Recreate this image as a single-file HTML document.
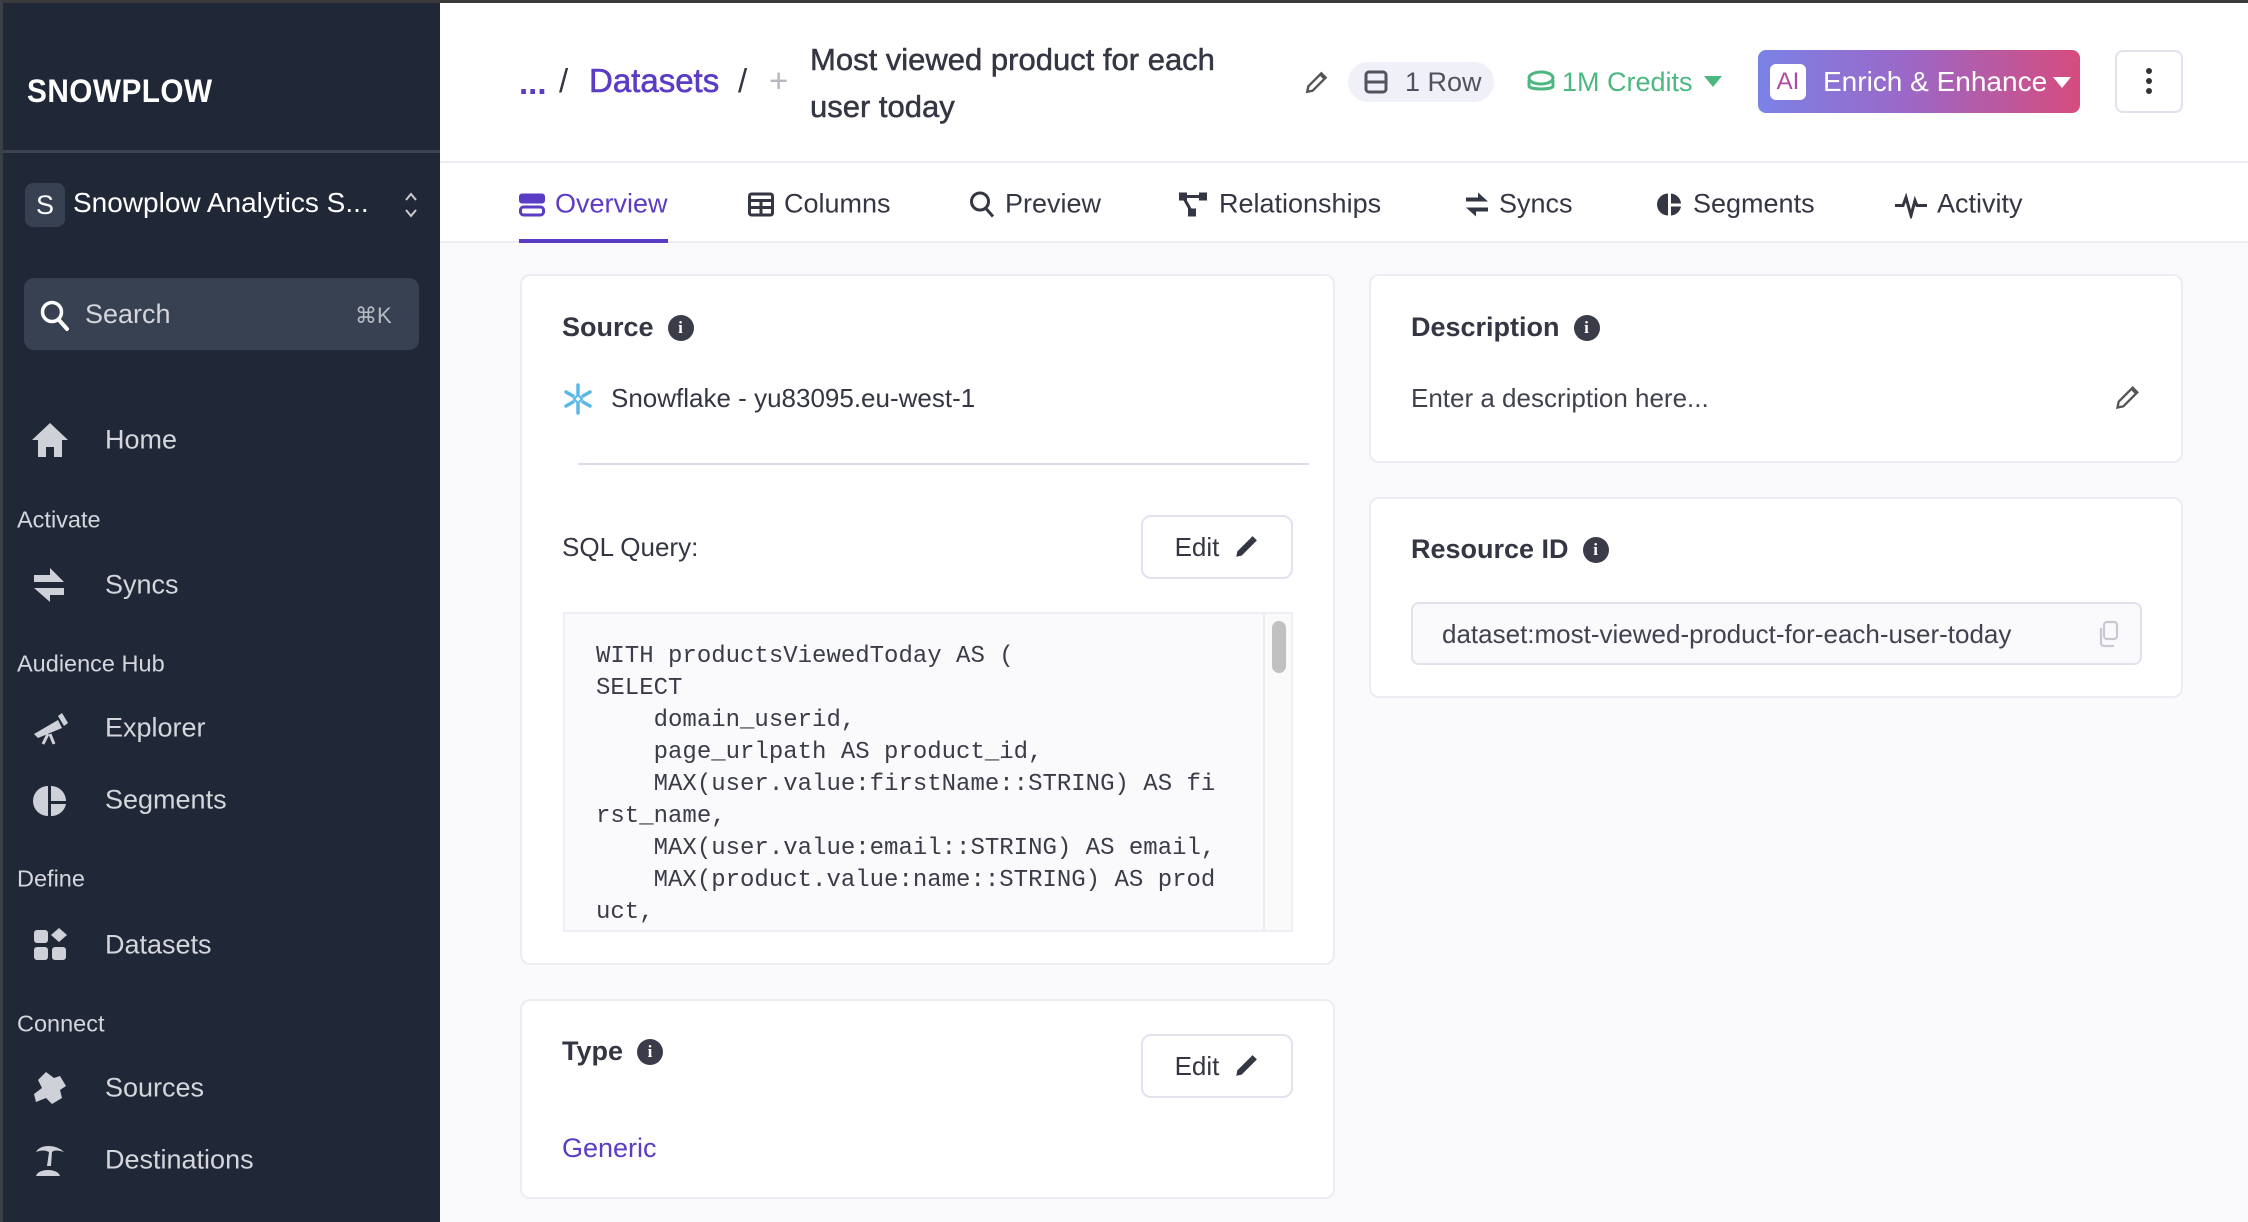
<!DOCTYPE html>
<html><head><meta charset="utf-8"><style>
*{box-sizing:border-box;margin:0;padding:0}
body{width:2248px;height:1222px;overflow:hidden;background:#fafafc;font-family:"Liberation Sans",sans-serif;color:#343643;position:relative}
.a{position:absolute;white-space:nowrap}
#sb{position:absolute;left:0;top:0;width:440px;height:1222px;background:#202837;border-top:3px solid #3a3a3a;border-left:3px solid #3a3f48}
.nav{position:absolute;left:102px;font-size:27px;color:#d4d6dc;transform:translateY(-50%)}
.lbl{position:absolute;left:14px;font-size:23.5px;color:#d4d6dc;transform:translateY(-50%)}
.ic{position:absolute;left:27px;width:40px;height:40px;transform:translateY(-50%)}
.card{position:absolute;background:#fff;border:2px solid #ececf3;border-radius:10px}
.h{font-size:27px;font-weight:bold;color:#343643}
.info{display:inline-block;width:26px;height:26px;border-radius:50%;background:#3a3c4a;color:#fff;font-size:17px;font-weight:bold;text-align:center;line-height:26px;font-family:"Liberation Serif",serif;vertical-align:3px;margin-left:14px}
.btn{position:absolute;border:2px solid #e2e2ee;border-radius:10px;background:#fff;font-size:26px;color:#343643;display:flex;align-items:center;justify-content:center;gap:14px}
.tab{position:absolute;top:204px;transform:translateY(-50%);font-size:27px;color:#343643;display:flex;align-items:center;gap:10px}
pre{font-family:"Liberation Mono",monospace;font-size:24px;line-height:32px;color:#3a3c48}
</style></head><body>
<div style="position:absolute;left:0;top:0;width:2248px;height:3px;background:#3a3a3a"></div>
<div id="sb">
 <div class="a" style="left:24px;top:70px;font-size:32px;font-weight:bold;color:#fff;letter-spacing:0.5px;transform:scaleX(0.93);transform-origin:left">SNOWPLOW</div>
 <div style="position:absolute;left:0;top:147px;width:440px;height:3px;background:#3d4350"></div>
 <div style="position:absolute;left:22px;top:180px;width:40px;height:44px;border-radius:8px;background:#374151;color:#fff;font-size:27px;text-align:center;line-height:44px">S</div>
 <div class="a" style="left:70px;top:184px;font-size:28px;color:#fff">Snowplow Analytics S...</div>
 <svg class="a" style="left:401px;top:188px" width="14" height="28" viewBox="0 0 14 28"><path d="M2 9l5-6 5 6M2 19l5 6 5-6" fill="none" stroke="#ccc" stroke-width="2"/></svg>
 <div style="position:absolute;left:21px;top:275px;width:395px;height:72px;border-radius:10px;background:#374151"></div>
 <svg class="a" style="left:37px;top:297px" width="30" height="32" viewBox="0 0 30 32"><circle cx="12" cy="12" r="9.5" fill="none" stroke="#fff" stroke-width="3.5"/><path d="M19 20l8 9" stroke="#fff" stroke-width="4" stroke-linecap="round"/></svg>
 <div class="a" style="left:82px;top:296px;font-size:27px;color:#d4d6dc">Search</div>
 <div class="a" style="left:352px;top:300px;font-size:22px;color:#b8bcc6">⌘K</div>
 <svg class="ic" style="top:437px" viewBox="0 0 40 40"><path d="M20 3L2 20h6v17h8V27h8v10h8V20h6z" fill="#cfd1d8"/></svg>
 <div class="nav" style="top:437px">Home</div>
 <div class="lbl" style="top:517px">Activate</div>
 <svg class="ic" style="top:582px" viewBox="0 0 40 40"><path d="M20 3v7H4v7h30zM20 37v-7h14v-7H4z" fill="#cfd1d8"/></svg>
 <div class="nav" style="top:582px">Syncs</div>
 <div class="lbl" style="top:661px">Audience Hub</div>
 <svg class="ic" style="top:725px" viewBox="0 0 40 40"><path d="M4 26l24-14 4 8-24 10zM28 8l4-3 6 10-4 3z" fill="#cfd1d8"/><path d="M18 26l-5 10M20 26l4 10" stroke="#cfd1d8" stroke-width="3"/></svg>
 <div class="nav" style="top:725px">Explorer</div>
 <svg class="ic" style="top:797px" viewBox="0 0 40 40"><path d="M18 6a15 15 0 0 0 0 30z" fill="#cfd1d8"/><path d="M21 6a15 15 0 0 1 15 15H21z M21 24h15a15 15 0 0 1-15 12z" fill="#cfd1d8"/></svg>
 <div class="nav" style="top:797px">Segments</div>
 <div class="lbl" style="top:876px">Define</div>
 <svg class="ic" style="top:942px" viewBox="0 0 40 40"><rect x="4" y="5" width="14" height="13" rx="3" fill="#cfd1d8"/><rect x="4" y="22" width="14" height="13" rx="3" fill="#cfd1d8"/><rect x="22" y="22" width="14" height="13" rx="3" fill="#cfd1d8"/><path d="M29 3l8 7-8 7-8-7z" fill="#cfd1d8"/></svg>
 <div class="nav" style="top:942px">Datasets</div>
 <div class="lbl" style="top:1021px">Connect</div>
 <svg class="ic" style="top:1085px" viewBox="0 0 40 40"><path d="M16 4l8 6 6-2 6 10-6 4 2 8-10 6-6-6-10 4-2-8 8-6-4-8z" fill="#cfd1d8"/></svg>
 <div class="nav" style="top:1085px">Sources</div>
 <svg class="ic" style="top:1157px" viewBox="0 0 40 40"><path d="M6 12c4-8 20-8 28 0-6-2-10-2-12 0l-1 14h-4l2-14c-4-2-8-2-13 0z" fill="#cfd1d8"/><path d="M6 36c2-8 22-8 24 0z" fill="#cfd1d8"/></svg>
 <div class="nav" style="top:1157px">Destinations</div>
</div>

<!-- header -->
<div style="position:absolute;left:440px;top:3px;width:1808px;height:240px;background:#fff;border-bottom:2px solid #ededf3"></div>
<div style="position:absolute;left:440px;top:161px;width:1808px;height:2px;background:#ededf3"></div>
<div class="a" style="left:519px;top:64px;font-size:33px;font-weight:bold;color:#5b3cc4">...</div>
<div class="a" style="left:559px;top:62px;font-size:33px;color:#343643">/</div>
<div class="a" style="left:589px;top:62px;font-size:33px;color:#5b3cc4;-webkit-text-stroke:0.6px #5b3cc4">Datasets</div>
<div class="a" style="left:738px;top:62px;font-size:33px;color:#343643">/</div>
<div class="a" style="left:769px;top:62px;font-size:33px;color:#b5b6c0">+</div>
<div class="a" style="left:810px;top:36px;font-size:31px;line-height:47px;color:#343643;white-space:normal;width:470px;-webkit-text-stroke:0.5px #343643">Most viewed product for each user today</div>
<svg class="a" style="left:1304px;top:69px" width="26" height="26" viewBox="0 0 24 24"><path d="M3 21l1-5L16 4l4 4L8 20z" fill="none" stroke="#555" stroke-width="2.2"/><path d="M15 5l4 4" stroke="#555" stroke-width="2.2"/></svg>
<div style="position:absolute;left:1348px;top:62px;width:146px;height:40px;border-radius:20px;background:#f0f0f8"></div>
<svg class="a" style="left:1364px;top:70px" width="24" height="24" viewBox="0 0 24 24"><rect x="2" y="2" width="20" height="20" rx="3" fill="none" stroke="#505260" stroke-width="3"/><path d="M2 12h20" stroke="#505260" stroke-width="3"/></svg>
<div class="a" style="left:1405px;top:67px;font-size:27px;color:#505260">1 Row</div>
<svg class="a" style="left:1527px;top:70px" width="28" height="24" viewBox="0 0 28 24"><ellipse cx="14" cy="8" rx="12" ry="6" fill="none" stroke="#4cb880" stroke-width="3"/><path d="M2 10v6c0 4 24 4 24 0v-6" fill="none" stroke="#4cb880" stroke-width="3"/></svg>
<div class="a" style="left:1562px;top:67px;font-size:27px;color:#4cb880">1M Credits</div>
<div class="a" style="left:1704px;top:76px;width:0;height:0;border-left:9px solid transparent;border-right:9px solid transparent;border-top:11px solid #4cb880"></div>
<div style="position:absolute;left:1758px;top:50px;width:322px;height:63px;border-radius:8px;background:linear-gradient(90deg,#7b82e6,#9a68c8 45%,#d64b7e)"></div>
<div style="position:absolute;left:1770px;top:64px;width:36px;height:36px;border-radius:6px;background:#fff;font-size:24px;text-align:center;line-height:36px;color:#b04aa0">AI</div>
<div class="a" style="left:1823px;top:66px;font-size:28px;color:#fff">Enrich &amp; Enhance</div>
<div class="a" style="left:2053px;top:77px;width:0;height:0;border-left:9px solid transparent;border-right:9px solid transparent;border-top:11px solid #fff"></div>
<div style="position:absolute;left:2115px;top:50px;width:68px;height:63px;border:2px solid #e2e2ee;border-radius:8px;background:#fff"></div>
<div class="a" style="left:2146px;top:68px;width:6px;height:6px;border-radius:3px;background:#333;box-shadow:0 10px 0 #333,0 20px 0 #333"></div>

<!-- tabs -->
<div class="tab" style="left:519px;color:#5b3cc4"><svg width="26" height="24" viewBox="0 0 26 24"><rect x="0" y="1" width="26" height="10" rx="3" fill="#5b3cc4"/><rect x="1.5" y="14.5" width="23" height="8" rx="3" fill="none" stroke="#5b3cc4" stroke-width="3"/></svg>Overview</div>
<div style="position:absolute;left:519px;top:239px;width:149px;height:4px;background:#5b3cc4"></div>
<div class="tab" style="left:748px"><svg width="26" height="24" viewBox="0 0 26 24"><rect x="1.5" y="1.5" width="23" height="21" rx="2" fill="none" stroke="#343643" stroke-width="3"/><path d="M1 8h24M13 8v15M1 15h24" stroke="#343643" stroke-width="3"/></svg>Columns</div>
<div class="tab" style="left:969px"><svg width="26" height="28" viewBox="0 0 26 28"><circle cx="11" cy="11" r="8.5" fill="none" stroke="#343643" stroke-width="3"/><path d="M17 18l7 8" stroke="#343643" stroke-width="3"/></svg>Preview</div>
<div class="tab" style="left:1179px"><svg width="30" height="26" viewBox="0 0 30 26"><rect x="0" y="1" width="8" height="8" fill="#343643"/><rect x="20" y="1" width="8" height="8" fill="#343643"/><rect x="9" y="17" width="8" height="8" fill="#343643"/><path d="M4 5h20M4 5l9 16" stroke="#343643" stroke-width="3"/></svg>Relationships</div>
<div class="tab" style="left:1465px"><svg width="24" height="26" viewBox="0 0 24 26"><path d="M13 1v5H1v4h22zM11 25v-5h12v-4H1z" fill="#343643"/></svg>Syncs</div>
<div class="tab" style="left:1657px"><svg width="26" height="26" viewBox="0 0 26 26"><path d="M11 2a11 11 0 0 0 0 22z M14 2a11 11 0 0 1 10 10H14z M14 15h10a11 11 0 0 1-10 9z" fill="#343643"/></svg>Segments</div>
<div class="tab" style="left:1895px"><svg width="32" height="28" viewBox="0 0 32 28"><path d="M0 15h8l3-8 5 18 4-15 2 5h10" fill="none" stroke="#343643" stroke-width="3"/></svg>Activity</div>

<!-- source card -->
<div class="card" style="left:520px;top:274px;width:815px;height:691px"></div>
<div class="a h" style="left:562px;top:312px">Source<span class="info">i</span></div>
<svg class="a" style="left:562px;top:383px" width="32" height="32" viewBox="0 0 32 32"><g stroke="#5ab8e8" stroke-width="3.5" stroke-linecap="round"><path d="M16 2v9M16 21v9M4 9l7 4M21 19l7 4M4 23l7-4M21 13l7-4"/></g><path d="M16 12l4 4-4 4-4-4z" fill="none" stroke="#5ab8e8" stroke-width="2"/></svg>
<div class="a" style="left:611px;top:383px;font-size:26px;color:#343643">Snowflake - yu83095.eu-west-1</div>
<div style="position:absolute;left:578px;top:463px;width:731px;height:2px;background:#dcdce8"></div>
<div class="a" style="left:562px;top:532px;font-size:26px;color:#343643">SQL Query:</div>
<div class="btn" style="left:1141px;top:515px;width:152px;height:64px">Edit<svg width="26" height="26" viewBox="0 0 24 24"><path d="M3 21l1-5L16 4l4 4L8 20z" fill="#343643"/><path d="M17 3l4 4" stroke="#343643" stroke-width="3"/></svg></div>
<div style="position:absolute;left:563px;top:612px;width:730px;height:320px;background:#fafafc;border:2px solid #eeeef4;overflow:hidden">
<pre style="position:absolute;left:31px;top:27px">WITH productsViewedToday AS (
SELECT
    domain_userid,
    page_urlpath AS product_id,
    MAX(user.value:firstName::STRING) AS fi
rst_name,
    MAX(user.value:email::STRING) AS email,
    MAX(product.value:name::STRING) AS prod
uct,</pre>
<div style="position:absolute;left:698px;top:0;width:30px;height:320px;background:#fafafa;border-left:2px solid #ececec"></div>
<div style="position:absolute;left:707px;top:7px;width:14px;height:52px;border-radius:7px;background:#c1c1c1"></div>
</div>

<!-- type card -->
<div class="card" style="left:520px;top:999px;width:815px;height:200px"></div>
<div class="a h" style="left:562px;top:1036px">Type<span class="info">i</span></div>
<div class="btn" style="left:1141px;top:1034px;width:152px;height:64px">Edit<svg width="26" height="26" viewBox="0 0 24 24"><path d="M3 21l1-5L16 4l4 4L8 20z" fill="#343643"/><path d="M17 3l4 4" stroke="#343643" stroke-width="3"/></svg></div>
<div class="a" style="left:562px;top:1133px;font-size:27px;color:#5b3cc4">Generic</div>

<!-- description -->
<div class="card" style="left:1369px;top:274px;width:814px;height:189px"></div>
<div class="a h" style="left:1411px;top:312px">Description<span class="info">i</span></div>
<div class="a" style="left:1411px;top:383px;font-size:26px;color:#40424e">Enter a description here...</div>
<svg class="a" style="left:2114px;top:383px" width="28" height="28" viewBox="0 0 24 24"><path d="M3 21l1-5L16 4l4 4L8 20z" fill="none" stroke="#555" stroke-width="2"/><path d="M15 5l4 4" stroke="#555" stroke-width="2"/></svg>

<!-- resource id -->
<div class="card" style="left:1369px;top:497px;width:814px;height:201px"></div>
<div class="a h" style="left:1411px;top:534px">Resource ID<span class="info">i</span></div>
<div style="position:absolute;left:1411px;top:602px;width:731px;height:63px;border:2px solid #e2e2ee;border-radius:8px;background:#fafafc"></div>
<div class="a" style="left:1442px;top:619px;font-size:26px;color:#40424e">dataset:most-viewed-product-for-each-user-today</div>
<svg class="a" style="left:2096px;top:620px" width="24" height="28" viewBox="0 0 24 28"><rect x="8" y="2" width="13" height="17" rx="3" fill="none" stroke="#c8c8d4" stroke-width="2.2"/><path d="M5 8v15a3 3 0 0 0 3 3h10" fill="none" stroke="#c8c8d4" stroke-width="2.2"/></svg>
</body></html>
